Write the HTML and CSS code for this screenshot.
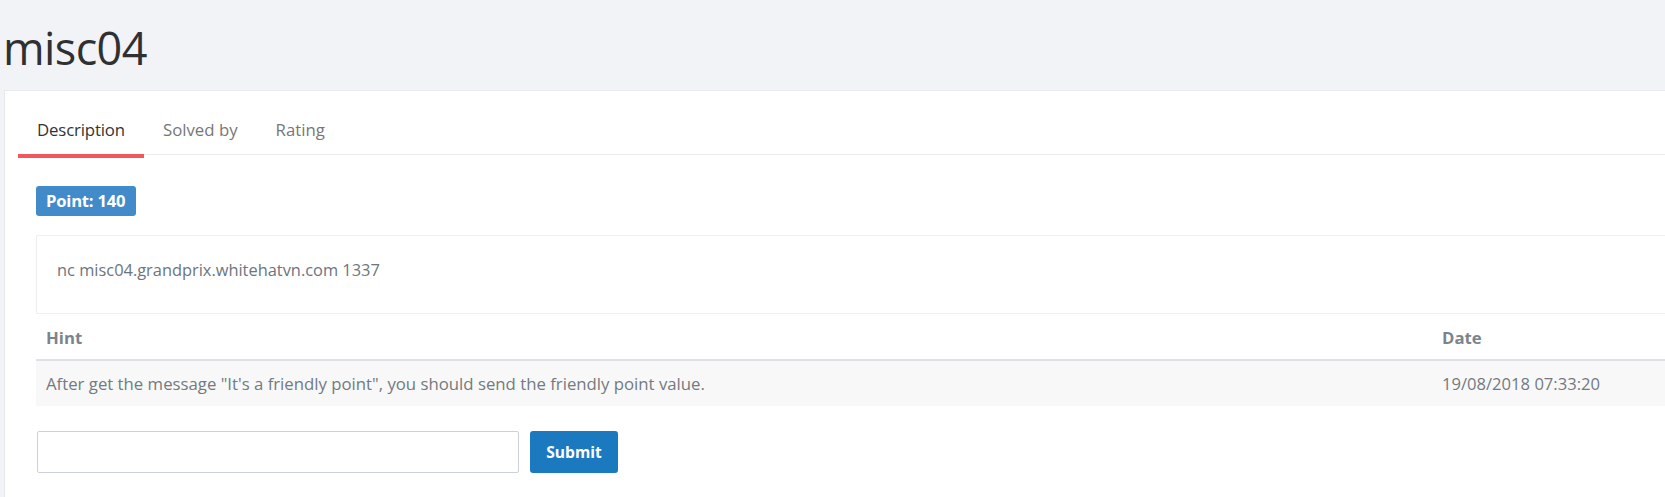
FILE: index.html
```html
<!DOCTYPE html>
<html>
<head>
<meta charset="utf-8">
<title>misc04</title>
<link rel="stylesheet" href="styles.css">
</head>
<body>
<div class="page">
  <h1 class="title">misc04</h1>
  <div class="card">
    <ul class="tabs">
      <li class="tab active">Description</li>
      <li class="tab">Solved by</li>
      <li class="tab">Rating</li>
    </ul>
    <div class="content">
      <span class="badge">Point: 140</span>
      <div class="desc">nc misc04.grandprix.whitehatvn.com 1337</div>
      <table class="hints">
        <thead>
          <tr><th class="col-hint">Hint</th><th>Date</th></tr>
        </thead>
        <tbody>
          <tr><td>After get the message "It's a friendly point", you should send the friendly point value.</td><td class="date">19/08/2018 07:33:20</td></tr>
        </tbody>
      </table>
      <form class="submit-row">
        <input class="flag-input" type="text">
        <button class="btn" type="button">Submit</button>
      </form>
    </div>
  </div>
</div>
</body>
</html>
```

FILE: styles.css
```css
html, body {
  margin: 0;
  padding: 0;
  background: #f1f3f7;
  overflow: hidden;
}
body {
  font-family: "Open Sans", "Liberation Sans", sans-serif;
  color: #333;
}
.page {
  width: 1720px;
  padding-left: 4px;
}
.title {
  margin: 0 0 0 -1px;
  height: 90px;
  padding-top: 20px;
  box-sizing: border-box;
  font-size: 45px;
  line-height: 56px;
  font-weight: 500;
  color: #2f3033;
  letter-spacing: -0.6px;
}
.card {
  background: #fff;
  border: 1px solid #e7e9ee;
  padding: 12px 13px 40px;
  min-height: 500px;
}
.tabs {
  list-style: none;
  margin: 0;
  padding: 0;
  display: flex;
  border-bottom: 1px solid #e7ecf1;
}
.tab {
  padding: 16px 19px 14px;
  font-size: 16.8px;
  line-height: 21px;
  color: #777;
  border-bottom: 4px solid transparent;
  margin-bottom: -4px;
}
.tab.active {
  color: #333;
  border-bottom-color: #f3565d;
  letter-spacing: -0.15px;
}
.content {
  padding: 31px 0 0 18px;
}
.badge {
  display: inline-block;
  background: #428bca;
  color: #fff;
  font-weight: 700;
  font-size: 16.6px;
  line-height: 30px;
  height: 30px;
  padding: 0 10px;
  border-radius: 3px;
  width: 100px;
  box-sizing: border-box;
  letter-spacing: -0.2px;
  white-space: nowrap;
}
.desc {
  margin-top: 19px;
  border: 1px solid #eef0f3;
  padding: 22px 20px 31px;
  font-size: 16.4px;
  line-height: 24px;
  color: #6c757d;
}
.hints {
  width: 100%;
  border-collapse: collapse;
  font-size: 16.75px;
  line-height: 21px;
}
.hints th {
  text-align: left;
  font-weight: 700;
  color: #7b848c;
  padding: 13px 10px 11px;
  border-bottom: 2px solid #dee2e6;
}
.hints th.col-hint {
  width: 1376px;
}
.hints td {
  background: #f8f8f8;
  color: #737a81;
  padding: 12px 10px 12px;
}
.hints td.date {
  font-size: 16.6px;
}
.submit-row {
  display: flex;
  gap: 11px;
  margin-top: 25px;
}
.flag-input {
  width: 482px;
  height: 42px;
  box-sizing: border-box;
  border: 1px solid #c9d1dc;
  border-radius: 2px;
  margin: 0 0 0 1px;
  padding: 6px 12px;
  font-family: inherit;
  font-size: 14px;
}
.btn {
  width: 88px;
  height: 42px;
  border: none;
  border-radius: 3px;
  background: #1b7abf;
  color: #fff;
  font-family: inherit;
  font-weight: 700;
  font-size: 15.6px;
  padding: 0;
}
```
